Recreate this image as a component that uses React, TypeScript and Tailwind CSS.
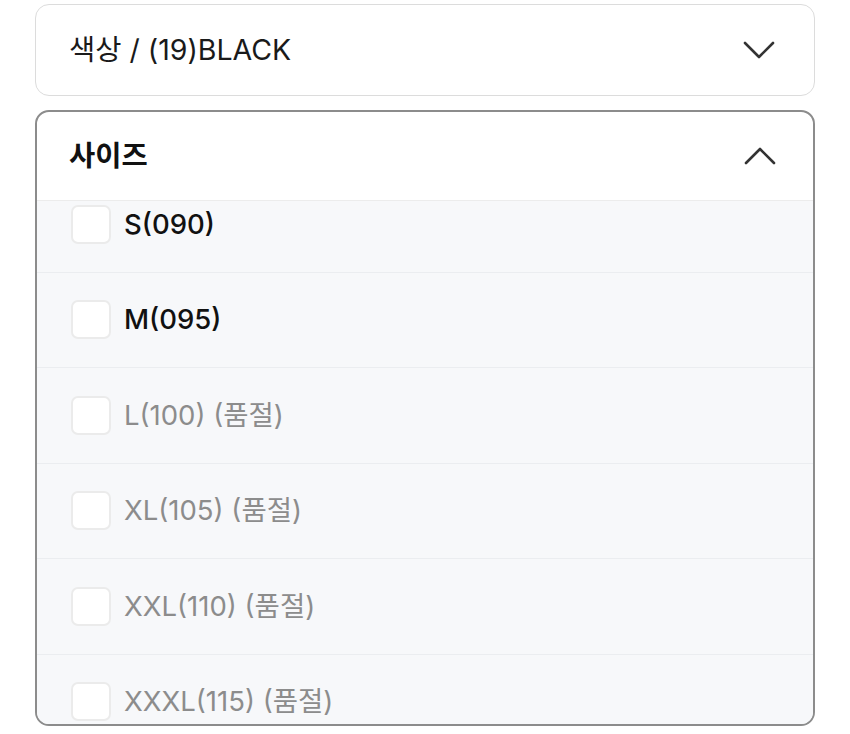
import React from 'react';

const sizes = [
  { label: 'S(090)', soldOut: false },
  { label: 'M(095)', soldOut: false },
  { label: 'L(100) (품절)', soldOut: true },
  { label: 'XL(105) (품절)', soldOut: true },
  { label: 'XXL(110) (품절)', soldOut: true },
  { label: 'XXXL(115) (품절)', soldOut: true },
];

const Chevron = ({ up = false }: { up?: boolean }) => (
  <svg width="32" height="18" viewBox="0 0 32 18" fill="none">
    <path
      d={up ? 'M2 16L16 2L30 16' : 'M2 2L16 16L30 2'}
      stroke="#333"
      strokeWidth="2.6"
      strokeLinecap="round"
      strokeLinejoin="round"
    />
  </svg>
);

export default function App() {
  return (
    <div
      className="w-[850px] h-[734px] bg-white overflow-hidden pt-[4px] px-[35px]"
      style={{ fontFamily: 'Inter, "Noto Sans CJK KR", sans-serif' }}
    >
      {/* color select */}
      <div className="h-[92px] border-[1.5px] border-[#dcdcdc] rounded-[14px] flex items-center justify-between pl-[33px] pr-[39px]">
        <span className="text-[28.5px] text-[#1a1a1a]">색상 / (19)BLACK</span>
        <Chevron />
      </div>

      {/* size select (open) */}
      <div className="mt-[14px] h-[616px] border-2 border-[#8c8c8c] rounded-[14px] overflow-hidden flex flex-col">
        <div className="h-[89px] shrink-0 flex items-center justify-between pl-[32px] pr-[37px] border-b border-[#ececec]">
          <span className="text-[28.5px] font-bold text-[#111]">사이즈</span>
          <Chevron up />
        </div>
        <div className="flex-1 bg-[#f7f8fa] overflow-hidden">
          <div className="-mt-[24px]">
            {sizes.map((s) => (
              <div
                key={s.label}
                className="h-[95.5px] flex items-center gap-[13px] pl-[34px] border-b border-[#ebedf0]"
              >
                <div className="w-[40px] h-[39px] bg-white border-2 border-[#ebebeb] rounded-[7px]" />
                <span
                  className={`text-[27.5px] ${
                    s.soldOut ? 'text-[#8c8c8c]' : 'text-[#111] font-medium'
                  }`}
                >
                  {s.label}
                </span>
              </div>
            ))}
          </div>
        </div>
      </div>
    </div>
  );
}
